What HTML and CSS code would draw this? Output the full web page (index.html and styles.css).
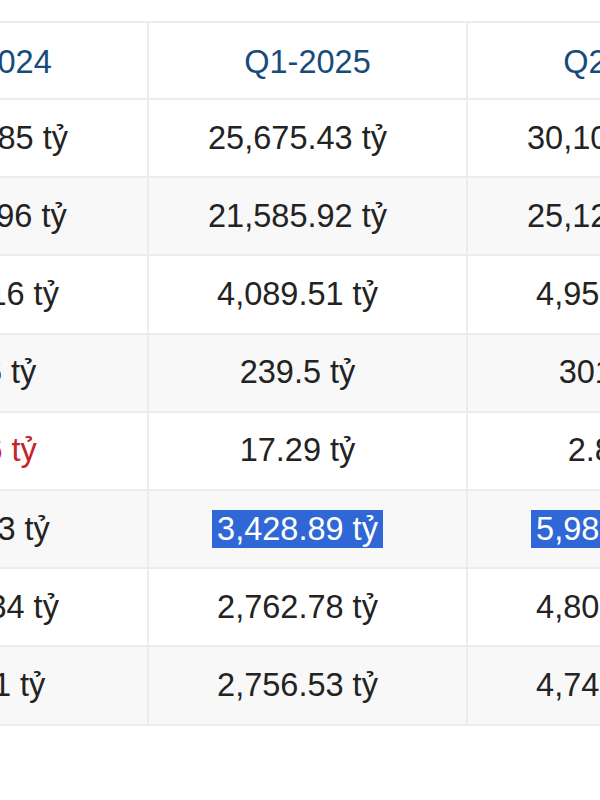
FILE: index.html
```html
<!DOCTYPE html>
<html lang="vi">
<head>
<meta charset="utf-8">
<link rel="stylesheet" href="styles.css">
</head>
<body>
<div class="viewport">
  <table class="fin">
    <colgroup><col class="c"><col class="c"><col class="c"></colgroup>
    <thead>
      <tr><th>Q4-2024</th><th>Q1-2025</th><th>Q2-2025</th></tr>
    </thead>
    <tbody>
      <tr><td>12,345.85 tỷ</td><td>25,675.43 tỷ</td><td>30,105.12 tỷ</td></tr>
      <tr><td>11,872.96 tỷ</td><td>21,585.92 tỷ</td><td>25,126.34 tỷ</td></tr>
      <tr><td>3,473.16 tỷ</td><td>4,089.51 tỷ</td><td>4,958.78 tỷ</td></tr>
      <tr><td>201.6 tỷ</td><td>239.5 tỷ</td><td>301.2 tỷ</td></tr>
      <tr><td class="neg">−13.6 tỷ</td><td>17.29 tỷ</td><td>2.84 tỷ</td></tr>
      <tr><td>1,872.3 tỷ</td><td><span class="sel">3,428.89 tỷ</span></td><td><span class="sel">5,981.27 tỷ</span></td></tr>
      <tr><td>2,691.34 tỷ</td><td>2,762.78 tỷ</td><td>4,803.65 tỷ</td></tr>
      <tr><td>687.71 tỷ</td><td>2,756.53 tỷ</td><td>4,742.18 tỷ</td></tr>
    </tbody>
  </table>
</div>
</body>
</html>
```

FILE: styles.css
```css
html, body {
  margin: 0;
  padding: 0;
  background: #ffffff;
}
body {
  width: 600px;
  height: 800px;
  overflow: hidden;
  font-family: "Liberation Sans", Arial, sans-serif;
}
.viewport {
  width: 600px;
  height: 800px;
  overflow: hidden;
  padding-top: 21px;
  box-sizing: border-box;
}
.fin {
  margin-left: -172px;
  border-collapse: collapse;
  table-layout: fixed;
  width: 957px;
  font-size: 32.5px;
}
.fin col.c {
  width: 319px;
}
.fin th, .fin td {
  padding: 0;
  border: 2px solid #ececec;
  text-align: center;
  vertical-align: middle;
  white-space: nowrap;
  overflow: hidden;
}
.fin th {
  height: 72px;
  padding-top: 3px;
  font-weight: normal;
  color: #174b7b;
  background: #ffffff;
}
.fin td {
  height: 76.2px;
  color: #232323;
  padding-right: 20px;
}
.fin tbody tr:nth-child(even) td {
  background: #f8f8f8;
}
.fin tbody tr:nth-child(odd) td {
  background: #ffffff;
}
.fin td.neg {
  color: #c8232b;
}
.sel {
  background: #2f68d6;
  color: #ffffff;
  padding: 1px 5px;
}
```
